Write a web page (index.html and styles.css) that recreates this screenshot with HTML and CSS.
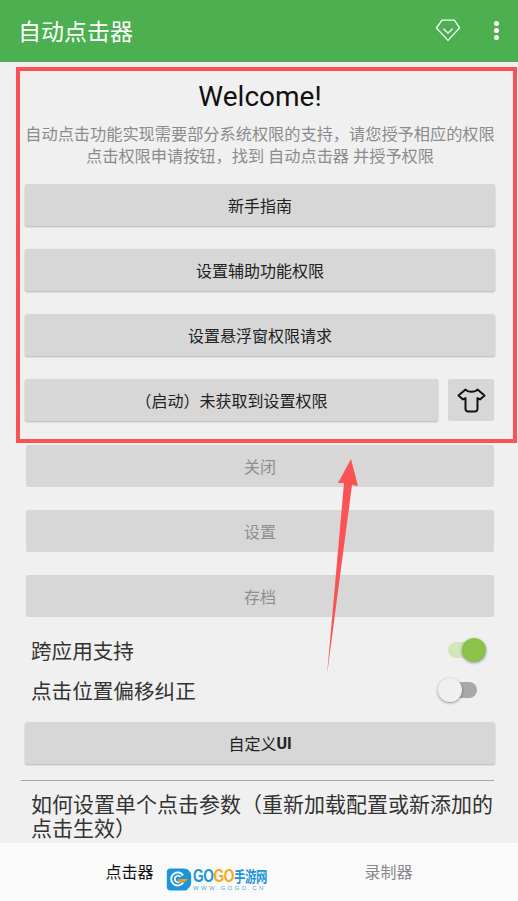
FILE: index.html
```html
<!DOCTYPE html>
<html lang="zh-CN">
<head>
    <meta charset="UTF-8">
    <meta name="viewport" content="width=device-width, initial-scale=1.0">
    <title>自动点击器</title>
    <link rel="stylesheet" href="styles.css">
</head>
<body>

    <!-- Barra superior -->
    <header class="appbar">
        <div class="appbar-title">自动点击器</div>
        <svg class="icon-gem" width="26" height="24" viewBox="0 0 26 24" fill="none" stroke="#fff" stroke-width="1.3">
            <path d="M7 2.200h12.400L24.600 10 13 22.400 1.400 10z"/>
            <path d="M8.400 10.600 13 15.200l4.600-4.600"/>
        </svg>
        <div class="more-dots"><span></span><span></span><span></span></div>
    </header>

    <main class="content">
        <h1 class="welcome">Welcome!</h1>
        <p class="intro">自动点击功能实现需要部分系统权限的支持，请您授予相应的权限<br>点击权限申请按钮，找到 自动点击器 并授予权限</p>

        <div class="btn btn-first">新手指南</div>
        <div class="btn">设置辅助功能权限</div>
        <div class="btn">设置悬浮窗权限请求</div>
        <div class="btn-row">
            <div class="btn btn-grow">（启动）未获取到设置权限</div>
            <div class="btn btn-shirt">
                <svg width="29" height="25" viewBox="0 0 29 25" fill="none" stroke="#111" stroke-width="2" stroke-linejoin="round">
                    <path d="M8.500 1.500 1.500 7.500l4.500 4 2.500-1.500v11a2.500 2.500 0 0 0 2.500 2.500h7a2.500 2.500 0 0 0 2.500-2.500V10l2.500 1.500 4.500-4-7-6c-1.200 1.500-3 2.300-6 2.300s-4.800-.8-6-2.300z"/>
                </svg>
            </div>
        </div>
        <div class="btn btn-off btn-off-first">关闭</div>
        <div class="btn btn-off">设置</div>
        <div class="btn btn-off">存档</div>

        <div class="switch-row switch-first">
            <span>跨应用支持</span>
            <span class="switch switch-on"></span>
        </div>
        <div class="switch-row">
            <span>点击位置偏移纠正</span>
            <span class="switch"></span>
        </div>

        <div class="btn btn-custom">自定义<b>UI</b></div>
        <div class="divider"></div>
        <p class="help">如何设置单个点击参数（重新加载配置或新添加的点击生效）</p>
    </main>

    <!-- Abas inferiores -->
    <nav class="tabs">
        <div class="tab tab-active">点击器</div>
        <div class="tab">录制器</div>
    </nav>

    <!-- Marca d'agua -->
    <div class="watermark">
        <svg width="26" height="24" viewBox="0 0 32 28">
            <path d="M5 1h17c5 0 9 4 9 9v8c0 3-1 5-3 7l-3 3H5c-2 0-4-2-4-4V5c0-2 2-4 4-4z" fill="#1d95d8"/>
            <path d="M21 9.500a8 8 0 1 0 0 9" fill="none" stroke="#fff" stroke-width="2.400"/>
            <path d="M18 11.500a4 4 0 1 0 0 5" fill="none" stroke="#fff" stroke-width="2"/>
            <path d="M15 14h12l-4 4h-8z" fill="#f29a1f"/>
        </svg>
        <div class="mark-text">
            <div class="mark-name"><i>GO</i><em>GO</em><i class="mark-cn">手游网</i></div>
            <div class="mark-url">WWW.GOGO.CN</div>
        </div>
    </div>

    <!-- Anotacao vermelha -->
    <div class="red-box"></div>
    <svg class="red-arrow" width="518" height="901" viewBox="0 0 518 901">
        <polygon points="351,459 338,483 344,483 327,675 352,485 358,486" fill="#fb5355"/>
    </svg>

</body>
</html>
```

FILE: styles.css
```css
* {
    box-sizing: border-box;
}

body {
    font-family: 'Roboto', 'Noto Sans CJK SC', sans-serif;
    background-color: #f0f0f0;
    margin: 0;
    padding: 0;
    width: 518px;
    height: 901px;
    overflow: hidden;
    position: relative;
    display: flex;
    flex-direction: column;
}

/* Barra superior */
.appbar {
    height: 62px;
    flex: none;
    background-color: #4caf50;
    display: flex;
    align-items: center;
    padding: 0 19px 2px 18px;
    color: #fff;
}

.appbar-title {
    font-size: 23px;
    flex: 1;
}

.icon-gem {
    margin-right: 33px;
}

.more-dots {
    display: flex;
    flex-direction: column;
    gap: 2px;
}

.more-dots span {
    width: 5px;
    height: 5px;
    border-radius: 50%;
    background-color: #fff;
}

/* Conteudo */
.content {
    flex: 1;
    overflow: hidden;
    padding: 0 23px 0 25px;
}

.welcome {
    margin: 16px 0 0;
    height: 38px;
    line-height: 38px;
    font-size: 28px;
    font-weight: 400;
    color: #111;
    text-align: center;
}

.intro {
    margin: 8px -8px 0 -8px;
    font-size: 16.200px;
    line-height: 22px;
    color: #8b8b8b;
    text-align: center;
    white-space: nowrap;
}

.btn {
    height: 42px;
    margin-top: 23px;
    background-color: #d6d7d6;
    border-radius: 2px;
    box-shadow: 0 1px 2px rgba(0, 0, 0, 0.25);
    font-size: 16px;
    color: #222;
    display: flex;
    align-items: center;
    justify-content: center;
}

.btn-first {
    margin-top: 16px;
}

.btn b {
    font-weight: 700;
}

.btn-row {
    display: flex;
    gap: 10px;
    margin-top: 23px;
}

.btn-grow {
    flex: 1;
    margin-top: 0;
}

.btn-shirt {
    width: 46px;
    margin-top: 0;
    margin-right: 1px;
    box-shadow: none;
}

.btn-off {
    margin-left: 1px;
    margin-right: 1px;
    box-shadow: none;
    color: #8f8f8f;
}

.btn-off-first {
    margin-top: 24px;
}

/* Chaves */
.switch-row {
    height: 40px;
    display: flex;
    align-items: center;
    justify-content: space-between;
    padding: 0 18px 0 6px;
    font-size: 20.600px;
    color: #333;
}

.switch-first {
    margin-top: 13px;
}

.switch {
    width: 38px;
    height: 16px;
    border-radius: 8px;
    background-color: #a9a9a9;
    position: relative;
}

.switch::after {
    content: "";
    position: absolute;
    left: -1px;
    top: -4px;
    width: 24px;
    height: 24px;
    border-radius: 50%;
    background-color: #f0f0f0;
    box-shadow: 0 1px 3px rgba(0, 0, 0, 0.4);
}

.switch-on {
    width: 30px;
    margin-right: -1px;
    background-color: #d3e5bb;
}

.switch-on::after {
    left: auto;
    right: -8px;
    background-color: #8bc34a;
}

.btn-custom {
    margin-top: 12px;
}

.divider {
    height: 1px;
    margin: 16px 1px 0 -4px;
    background-color: #a8a8a8;
}

.help {
    margin: 12px 0 0 6px;
    font-size: 21px;
    line-height: 24px;
    color: #333;
}

/* Abas inferiores */
.tabs {
    height: 58px;
    flex: none;
    background-color: #fafafa;
    display: flex;
}

.tab {
    flex: 1;
    display: flex;
    align-items: center;
    justify-content: center;
    padding-bottom: 2px;
    font-size: 16px;
    color: #888;
}

.tab-active {
    color: #111;
}

/* Marca d'agua */
.watermark {
    position: absolute;
    left: 166px;
    top: 867px;
    display: flex;
    gap: 1px;
}

.mark-text {
    font-family: 'Liberation Sans', 'Noto Sans CJK SC', sans-serif;
    line-height: 1;
}

.mark-name {
    font-size: 18px;
    font-weight: 700;
    white-space: nowrap;
    letter-spacing: -0.5px;
    transform: scaleX(0.76);
    transform-origin: left;
}

.mark-name i {
    font-style: normal;
    color: #1d95d8;
}

.mark-name .mark-cn {
    font-size: 15px;
}

.mark-name em {
    font-style: normal;
    color: #f7a81b;
}

.mark-url {
    font-size: 6px;
    letter-spacing: 2.300px;
    color: #4aa8dc;
    white-space: nowrap;
}

/* Anotacao vermelha */
.red-box {
    position: absolute;
    left: 16px;
    top: 67px;
    width: 501px;
    height: 376px;
    border: 4px solid #fb5355;
}

.red-arrow {
    position: absolute;
    left: 0;
    top: 0;
    pointer-events: none;
}
```
